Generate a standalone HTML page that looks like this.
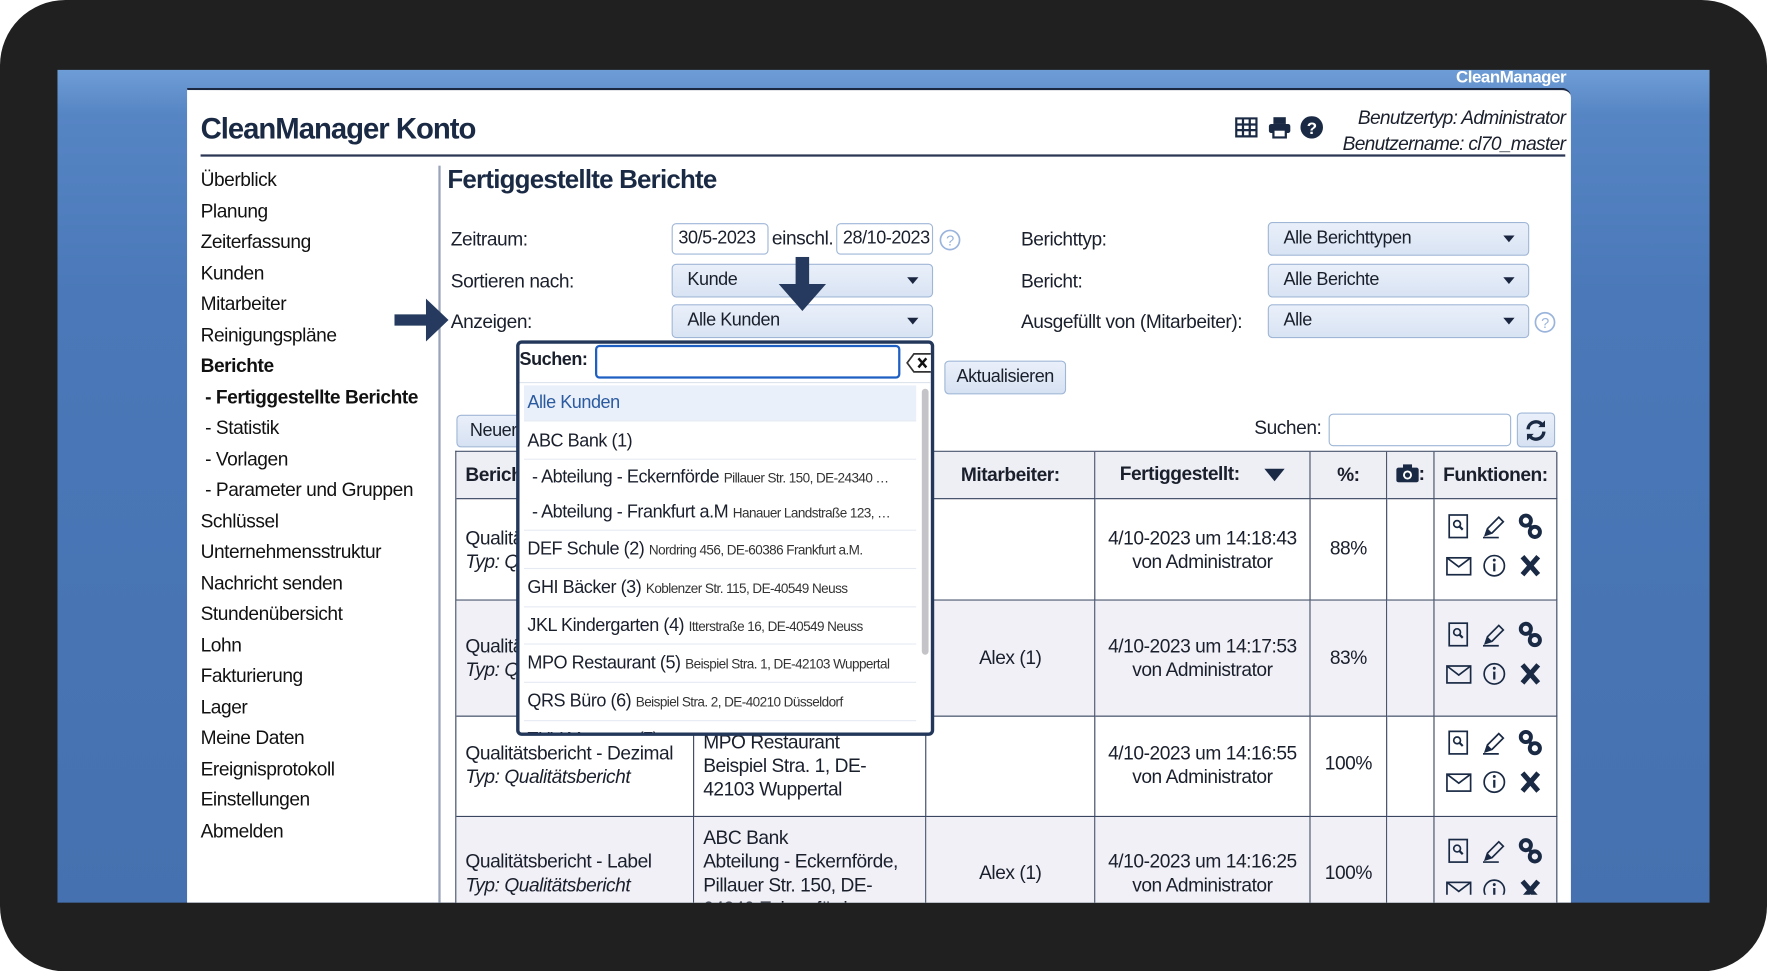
<!DOCTYPE html>
<html><head><meta charset="utf-8"><style>
*{margin:0;padding:0;box-sizing:border-box}
html,body{width:1767px;height:971px;overflow:hidden;background:#fff}
#s{position:absolute;left:0;top:0;width:1568px;height:862px;transform:scale(1.12691);transform-origin:0 0;font-family:"Liberation Sans",Arial,sans-serif;color:#1a1f2c;letter-spacing:-0.4px}
.a{position:absolute;white-space:nowrap}
.frame{left:0;top:0;width:1568px;height:862px;background:#202020;border-radius:58px}
.blue{left:51px;top:62px;width:1466px;height:739px;background:linear-gradient(180deg,#6e9dd6 0,#5685c4 40px,#4a78b8 200px,#4671b0 100%);overflow:hidden}
.panel{left:166px;top:78px;width:1228px;height:740px;background:#fff;border-top:2px solid #1c2840;border-radius:0 8px 0 0}
.nav{font-size:17px;color:#111}
.lbl{font-size:17px;color:#1a1f2c}
.inp{background:#fff;border:1px solid #9fb6d6;border-radius:4px;font-size:16px;padding-left:5px;line-height:26px}
.sel{background:linear-gradient(#eaf0fa,#d8e3f3);border:1px solid #9fb6d6;border-radius:4px;font-size:16px;padding-left:13px;line-height:28px}
.sel:after{content:"";position:absolute;right:12px;top:11px;border-left:5px solid transparent;border-right:5px solid transparent;border-top:6px solid #1a2540}
.btn{background:linear-gradient(#eaf0fa,#d6e1f2);border:1px solid #9fb6d6;border-radius:4px;font-size:16px;text-align:center}
.c{position:absolute;border-right:1px solid #3a4660;border-bottom:1px solid #3a4660;font-size:17px;color:#1a1f2c;white-space:nowrap;overflow:hidden}
.h{background:#eeeef5;font-weight:bold}
.dd{left:458px;top:302px;width:371px;height:351px;border:3px solid #22375a;border-radius:5px;background:#fff;overflow:hidden}
.it{position:absolute;left:4px;width:348px;font-size:16px;color:#1a1f2c;border-bottom:1px solid #e6ebf3;padding-left:3px;white-space:nowrap;overflow:hidden}
.it small{font-size:12px;color:#333;letter-spacing:-0.5px}
</style></head><body><div id="s">
<div class="a frame"></div>
<div class="a blue">
<div class="a" style="left:1241px;top:-2px;color:#fff;font-weight:bold;font-size:15px">CleanManager</div>
</div>
<div style="position:absolute;left:51px;top:62px;width:1466px;height:739px;overflow:hidden">
<div class="a panel" style="left:115px;top:16px"></div>
</div>
<div style="position:absolute;left:0;top:0;width:1568px;height:801px;overflow:hidden">
<div class="a" style="left:178px;top:99px;font-size:26px;font-weight:bold;color:#1a2a44;letter-spacing:-0.9px">CleanManager Konto</div>
<svg class="a" style="left:1096px;top:104px" width="20" height="18" viewBox="0 0 20 18"><rect x="1" y="1" width="18" height="16" fill="none" stroke="#1a2a44" stroke-width="2"/><path d="M1 6.5H19M1 11.5H19M7 1V17M13 1V17" stroke="#1a2a44" stroke-width="2"/></svg>
<svg class="a" style="left:1125px;top:103px" width="21" height="20" viewBox="0 0 21 20"><rect x="5" y="1" width="11" height="6" fill="#1a2a44"/><rect x="1" y="7" width="19" height="8" rx="2" fill="#1a2a44"/><rect x="5" y="12" width="11" height="7" fill="#fff" stroke="#1a2a44" stroke-width="2"/></svg>
<svg class="a" style="left:1154px;top:103px" width="20" height="20" viewBox="0 0 20 20"><circle cx="10" cy="10" r="10" fill="#1a2a44"/><text x="10" y="16" text-anchor="middle" font-family="Liberation Sans" font-weight="bold" font-size="15" fill="#fff">?</text></svg>
<div class="a" style="right:179px;top:93px;font-size:17px;font-style:italic;text-align:right;line-height:23px;letter-spacing:-0.6px">Benutzertyp: Administrator<br>Benutzername: cl70_master</div>
<div class="a" style="left:178px;top:137px;width:1211px;height:2px;background:#2a3654"></div>
<div class="a" style="left:389px;top:147px;width:2px;height:660px;background:#9aa4b8"></div>
<div class="a nav" style="left:178px;top:146px;line-height:27.5px">Überblick<br>Planung<br>Zeiterfassung<br>Kunden<br>Mitarbeiter<br>Reinigungspläne<br><b>Berichte</b><br><b style="margin-left:4px">- Fertiggestellte Berichte</b><br><span style="margin-left:4px">- Statistik</span><br><span style="margin-left:4px">- Vorlagen</span><br><span style="margin-left:4px">- Parameter und Gruppen</span><br>Schlüssel<br>Unternehmensstruktur<br>Nachricht senden<br>Stundenübersicht<br>Lohn<br>Fakturierung<br>Lager<br>Meine Daten<br>Ereignisprotokoll<br>Einstellungen<br>Abmelden</div>
<div class="a" style="left:397px;top:146px;font-size:23px;font-weight:bold;color:#1a2a44;letter-spacing:-0.7px">Fertiggestellte Berichte</div>
<div class="a lbl" style="left:400px;top:203px">Zeitraum:</div>
<div class="a lbl" style="left:400px;top:240px">Sortieren nach:</div>
<div class="a lbl" style="left:400px;top:276px">Anzeigen:</div>
<div class="a inp" style="left:596px;top:198px;width:86px;height:28px">30/5-2023</div>
<div class="a lbl" style="left:685px;top:202px">einschl.</div>
<div class="a inp" style="left:742px;top:198px;width:86px;height:28px">28/10-2023</div>
<svg class="a" style="left:833px;top:203px" width="20" height="20"><circle cx="10" cy="10" r="8.5" fill="none" stroke="#9ab4dc" stroke-width="1.5"/><text x="10" y="15" text-anchor="middle" font-size="13" font-family="Liberation Sans" fill="#9ab4dc">?</text></svg>
<div class="a sel" style="left:596px;top:234px;width:232px;height:30px">Kunde</div>
<div class="a sel" style="left:596px;top:270px;width:232px;height:30px">Alle Kunden</div>
<div class="a lbl" style="left:906px;top:203px">Berichttyp:</div>
<div class="a lbl" style="left:906px;top:240px">Bericht:</div>
<div class="a lbl" style="left:906px;top:276px">Ausgefüllt von (Mitarbeiter):</div>
<div class="a sel" style="left:1125px;top:197px;width:232px;height:30px">Alle Berichttypen</div>
<div class="a sel" style="left:1125px;top:234px;width:232px;height:30px">Alle Berichte</div>
<div class="a sel" style="left:1125px;top:270px;width:232px;height:30px">Alle</div>
<svg class="a" style="left:1361px;top:276px" width="20" height="20"><circle cx="10" cy="10" r="8.5" fill="none" stroke="#9ab4dc" stroke-width="1.5"/><text x="10" y="15" text-anchor="middle" font-size="13" font-family="Liberation Sans" fill="#9ab4dc">?</text></svg>
<svg class="a" style="left:350px;top:263px" width="50" height="42"><path d="M0 16H28V2L48 21L28 40V26H0Z" fill="#253a5e"/></svg>
<svg class="a" style="left:689px;top:228px" width="46" height="50"><path d="M17 0H29V24H44L23 48L2 24H17Z" fill="#253a5e"/></svg>
<div class="a btn" style="left:838px;top:320px;width:108px;height:30px;line-height:28px">Aktualisieren</div>
<div class="a btn" style="left:405px;top:368px;width:70px;height:29px;line-height:27px;text-align:left;padding-left:11px">Neuer</div>
<div class="a lbl" style="left:1113px;top:370px">Suchen:</div>
<div class="a inp" style="left:1179px;top:367px;width:162px;height:29px"></div>
<div class="a btn" style="left:1346px;top:366px;width:34px;height:31px"><svg width="22" height="22" viewBox="0 0 22 22" style="margin-top:4px"><path d="M4 10a7 7 0 0 1 12.5-4M18 12a7 7 0 0 1-12.5 4" fill="none" stroke="#1a2a44" stroke-width="3"/><path d="M19 2v6h-6z M3 20v-6h6z" fill="#1a2a44"/></svg></div>
<div style="position:absolute;left:404px;top:400px;width:977px;height:420px;border-left:1px solid #3a4660;border-top:1px solid #3a4660">
<div class="c h" style="left:0;top:0;width:211px;height:42px;padding:11px 8px">Bericht:</div>
<div class="c h" style="left:211px;top:0;width:206px;height:42px"></div>
<div class="c h" style="left:417px;top:0;width:150px;height:42px;text-align:center;padding-top:11px">Mitarbeiter:</div>
<div class="c h" style="left:567px;top:0;width:191px;height:42px;text-align:center;padding-top:10px">Fertiggestellt: <span style="display:inline-block;margin-left:18px;width:0;height:0;border-left:9px solid transparent;border-right:9px solid transparent;border-top:11px solid #1a2a44;vertical-align:-1px"></span></div>
<div class="c h" style="left:758px;top:0;width:68px;height:42px;text-align:center;padding-top:11px">%:</div>
<div class="c h" style="left:826px;top:0;width:42px;height:42px;text-align:center;padding-top:10px"><svg width="20" height="16" style="vertical-align:-2px"><rect x="0" y="3" width="20" height="13" rx="2" fill="#1a2a44"/><rect x="6" y="0" width="8" height="4" fill="#1a2a44"/><circle cx="10" cy="9.5" r="4" fill="#fff"/><circle cx="10" cy="9.5" r="2.3" fill="#1a2a44"/></svg>:</div>
<div class="c h" style="left:868px;top:0;width:109px;height:42px;text-align:center;padding-top:11px">Funktionen:</div>

<div class="c" style="left:0;top:42px;width:211px;height:90px;padding:24px 8px;line-height:21px">Qualitätsbericht<br><i>Typ: Qualitätsbericht</i></div>
<div class="c" style="left:211px;top:42px;width:206px;height:90px"></div>
<div class="c" style="left:417px;top:42px;width:150px;height:90px"></div>
<div class="c" style="left:567px;top:42px;width:191px;height:90px;text-align:center;padding-top:24px;line-height:21px">4/10-2023 um 14:18:43<br>von Administrator</div>
<div class="c" style="left:758px;top:42px;width:68px;height:90px;text-align:center;padding-top:34px">88%</div>
<div class="c" style="left:826px;top:42px;width:42px;height:90px"></div>
<div class="c" style="left:868px;top:42px;width:109px;height:90px"></div>

<div class="c" style="left:0;top:132px;width:211px;height:103px;background:#f0f0f6;padding:30px 8px;line-height:21px">Qualitätsbericht<br><i>Typ: Qualitätsbericht</i></div>
<div class="c" style="left:211px;top:132px;width:206px;height:103px;background:#f0f0f6"></div>
<div class="c" style="left:417px;top:132px;width:150px;height:103px;background:#f0f0f6;text-align:center;padding-top:41px">Alex (1)</div>
<div class="c" style="left:567px;top:132px;width:191px;height:103px;background:#f0f0f6;text-align:center;padding-top:30px;line-height:21px">4/10-2023 um 14:17:53<br>von Administrator</div>
<div class="c" style="left:758px;top:132px;width:68px;height:103px;background:#f0f0f6;text-align:center;padding-top:41px">83%</div>
<div class="c" style="left:826px;top:132px;width:42px;height:103px;background:#f0f0f6"></div>
<div class="c" style="left:868px;top:132px;width:109px;height:103px;background:#f0f0f6"></div>

<div class="c" style="left:0;top:235px;width:211px;height:89px;padding:22px 8px;line-height:21px">Qualitätsbericht - Dezimal<br><i>Typ: Qualitätsbericht</i></div>
<div class="c" style="left:211px;top:235px;width:206px;height:89px;padding:12px 8px;line-height:21px">MPO Restaurant<br>Beispiel Stra. 1, DE-<br>42103 Wuppertal</div>
<div class="c" style="left:417px;top:235px;width:150px;height:89px"></div>
<div class="c" style="left:567px;top:235px;width:191px;height:89px;text-align:center;padding-top:22px;line-height:21px">4/10-2023 um 14:16:55<br>von Administrator</div>
<div class="c" style="left:758px;top:235px;width:68px;height:89px;text-align:center;padding-top:32px">100%</div>
<div class="c" style="left:826px;top:235px;width:42px;height:89px"></div>
<div class="c" style="left:868px;top:235px;width:109px;height:89px"></div>

<div class="c" style="left:0;top:324px;width:211px;height:100px;background:#f0f0f6;padding:29px 8px;line-height:21px">Qualitätsbericht - Label<br><i>Typ: Qualitätsbericht</i></div>
<div class="c" style="left:211px;top:324px;width:206px;height:100px;background:#f0f0f6;padding:8px 8px;line-height:21px">ABC Bank<br>Abteilung - Eckernförde,<br>Pillauer Str. 150, DE-<br>24340 Eckernförde</div>
<div class="c" style="left:417px;top:324px;width:150px;height:100px;background:#f0f0f6;text-align:center;padding-top:40px">Alex (1)</div>
<div class="c" style="left:567px;top:324px;width:191px;height:100px;background:#f0f0f6;text-align:center;padding-top:29px;line-height:21px">4/10-2023 um 14:16:25<br>von Administrator</div>
<div class="c" style="left:758px;top:324px;width:68px;height:100px;background:#f0f0f6;text-align:center;padding-top:40px">100%</div>
<div class="c" style="left:826px;top:324px;width:42px;height:100px;background:#f0f0f6"></div>
<div class="c" style="left:868px;top:324px;width:109px;height:100px;background:#f0f0f6"></div>
</div>
<svg class="a" style="left:1280px;top:454px" width="95" height="340"><defs><g id="f">
<rect x="6" y="3" width="16" height="20" fill="none" stroke="#1a2a44" stroke-width="1.5"/><circle cx="13" cy="11" r="3" fill="none" stroke="#1a2a44" stroke-width="1.5"/><path d="M15 13l3 3" stroke="#1a2a44" stroke-width="2"/>
<path d="M36 23h14M38 21l2-6 10-10 4 4-10 10z" fill="none" stroke="#1a2a44" stroke-width="1.5"/><path d="M38 21l2-6 4 4z" fill="#1a2a44"/>
<circle cx="74" cy="8" r="4.5" fill="none" stroke="#1a2a44" stroke-width="3.5"/><circle cx="82" cy="18" r="4.5" fill="none" stroke="#1a2a44" stroke-width="3.5"/><path d="M76 11l4 4" stroke="#1a2a44" stroke-width="3"/>
<rect x="4" y="41" width="21" height="15" fill="none" stroke="#1a2a44" stroke-width="1.5"/><path d="M4 41l10.5 8 10.5-8" fill="none" stroke="#1a2a44" stroke-width="1.5"/>
<circle cx="46" cy="48" r="9" fill="none" stroke="#1a2a44" stroke-width="1.5"/><rect x="45" y="46" width="2" height="7" fill="#1a2a44"/><circle cx="46" cy="43" r="1.3" fill="#1a2a44"/>
<path d="M71 40l14 16M85 40l-14 16" stroke="#1a2a44" stroke-width="4.5"/>
</g></defs>
<use href="#f" x="0" y="0"/><use href="#f" x="0" y="96"/><use href="#f" x="0" y="192"/><use href="#f" x="0" y="288"/></svg>
<div class="a dd">
<div class="a" style="left:0;top:6px;font-size:16px;font-weight:bold">Suchen:</div>
<div class="a" style="left:67px;top:1px;width:271px;height:30px;border:2px solid #1e5fc4;border-radius:4px"></div>
<svg class="a" style="left:342px;top:7px" width="26" height="20"><path d="M8 2H24V18H8L2 10Z" fill="#fff" stroke="#333" stroke-width="1.5"/><path d="M12 6l7 8M19 6l-7 8" stroke="#111" stroke-width="2.2"/></svg>
<div class="a" style="left:0;top:34px;width:365px;height:1px;background:#dde3ec"></div>
<div class="it" style="top:37px;height:32px;line-height:32px;background:#eaf0f9;color:#2a5aa0">Alle Kunden</div>
<div class="it" style="top:70px;height:33px;line-height:33px">ABC Bank (1)</div>
<div class="it" style="top:103px;height:31px;line-height:31px;border:0">&nbsp;- Abteilung - Eckernförde <small>Pillauer Str. 150, DE-24340 …</small></div>
<div class="it" style="top:134px;height:32px;line-height:32px">&nbsp;- Abteilung - Frankfurt a.M <small>Hanauer Landstraße 123, …</small></div>
<div class="it" style="top:166px;height:34px;line-height:34px">DEF Schule (2) <small>Nordring 456, DE-60386 Frankfurt a.M.</small></div>
<div class="it" style="top:200px;height:34px;line-height:34px">GHI Bäcker (3) <small>Koblenzer Str. 115, DE-40549 Neuss</small></div>
<div class="it" style="top:234px;height:33px;line-height:33px">JKL Kindergarten (4) <small>Itterstraße 16, DE-40549 Neuss</small></div>
<div class="it" style="top:267px;height:34px;line-height:34px">MPO Restaurant (5) <small>Beispiel Stra. 1, DE-42103 Wuppertal</small></div>
<div class="it" style="top:301px;height:34px;line-height:34px">QRS Büro (6) <small>Beispiel Stra. 2, DE-40210 Düsseldorf</small></div>
<div class="it" style="top:335px;height:34px;line-height:34px;border:0">THV Museum (7) <small>Beispiel Stra. 3, DE-40211 Düsseldorf</small></div>
<div class="a" style="left:357px;top:40px;width:6px;height:236px;background:#c4c4c8;border-radius:3px"></div>
</div>
</div>
</div></body></html>
